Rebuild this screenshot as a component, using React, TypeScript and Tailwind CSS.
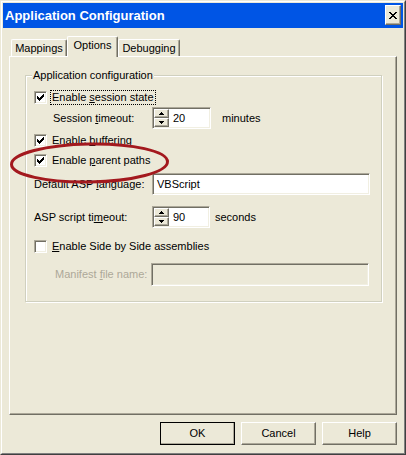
import type { ReactNode } from 'react';

const face = 'bg-[#ECE9D8]';
const sunken =
  'border border-t-[#ACA899] border-l-[#ACA899] border-r-white border-b-white shadow-[inset_1px_1px_0_#716F64,inset_-1px_-1px_0_#F1EFE2]';
const raised =
  'border border-t-white border-l-white border-r-[#716F64] border-b-[#716F64] shadow-[inset_-1px_-1px_0_#ACA899]';

function CheckBox({ checked }: { checked?: boolean }) {
  return (
    <span className={`w-[13px] h-[13px] shrink-0 bg-white flex items-center justify-center ${sunken}`}>
      {checked && (
        <svg width="7" height="7" viewBox="0 0 7 7" shapeRendering="crispEdges">
          <path d="M6 0h1v3h-1v1h-1v1h-1v1h-1v1h-1v-1h-1v-1h-1v-3h1v1h1v1h1v-1h1v-1h1z" fill="#000" />
        </svg>
      )}
    </span>
  );
}

function CheckRow({ checked, focused, children }: { checked?: boolean; focused?: boolean; children: ReactNode }) {
  return (
    <div className="h-[15px] flex items-center">
      <CheckBox checked={checked} />
      <span
        className={`ml-[3px] px-[1px] leading-[13px] border ${
          focused ? 'border-dotted border-black' : 'border-transparent'
        }`}
      >
        {children}
      </span>
    </div>
  );
}

function Arrow({ up }: { up?: boolean }) {
  return (
    <svg width="5" height="3" viewBox="0 0 5 3" shapeRendering="crispEdges">
      <path d={up ? 'M2 0h1v1h1v1h1v1h-5v-1h1v-1h1z' : 'M0 0h5v1h-1v1h-1v1h-1v-1h-1v-1h-1z'} fill="#000" />
    </svg>
  );
}

function Spinner({ value, width }: { value: string; width: string }) {
  return (
    <div className={`h-[22px] ${width} bg-white flex p-[1px] ${sunken}`}>
      <div className="flex flex-col w-[15px] shrink-0">
        <span className={`h-[10px] flex items-center justify-center ${face} ${raised}`}>
          <Arrow up />
        </span>
        <span className={`h-[10px] flex items-center justify-center ${face} ${raised}`}>
          <Arrow />
        </span>
      </div>
      <span className="pl-[4px] self-center">{value}</span>
    </div>
  );
}

function Tab({ label, active, width }: { label: string; active?: boolean; width: string }) {
  return (
    <div
      className={`${width} ${
        active ? 'h-[21px] -mb-px relative z-10' : 'h-[17px]'
      } ${face} border-t border-l border-white border-r border-r-[#716F64] rounded-t-[2px] shadow-[inset_-1px_0_0_#ACA899] flex items-center justify-center`}
    >
      <span className={active ? '-mt-[3px]' : ''}>{label}</span>
    </div>
  );
}

function DialogButton({ label, isDefault }: { label: string; isDefault?: boolean }) {
  return (
    <button
      className={`w-[75px] h-[23px] ${face} ${
        isDefault ? 'outline outline-1 outline-black -outline-offset-1' : ''
      } ${raised} flex items-center justify-center`}
    >
      {label}
    </button>
  );
}

export default function App() {
  return (
    <div className="relative w-[406px] h-[455px] bg-[#ECE9D8] font-['Liberation_Sans',Arial,sans-serif] text-[11px] text-black border border-t-[#ECE9D8] border-l-[#ECE9D8] border-r-[#404040] border-b-[#404040]">
      <div className="h-full border border-t-white border-l-white border-r-[#808080] border-b-[#808080] p-px flex flex-col">
        {/* title bar */}
        <div className="h-[25px] bg-[#0055E5] flex items-start shrink-0">
          <span className="pl-[2px] self-center text-white font-bold text-[13px] leading-none">
            Application Configuration
          </span>
          <span
            className={`ml-auto mr-[2px] mt-[2px] w-[16px] h-[20px] ${face} ${raised} flex items-center justify-center`}
          >
            <svg width="8" height="7" viewBox="0 0 8 7" shapeRendering="crispEdges">
              <path
                d="M0 0h2v1h1v1h2v-1h1v-1h2v1h-1v1h-1v1h-1v1h1v1h1v1h1v1h-2v-1h-1v-1h-2v1h-1v1h-2v-1h1v-1h1v-1h1v-1h-1v-1h-1v-1h-1z"
                fill="#000"
              />
            </svg>
          </span>
        </div>

        <div className="pl-[6px] pt-[8px]">
          {/* tabs */}
          <div className="flex items-end h-[20px] pl-[2px]">
            <Tab label="Mappings" width="w-[56px]" />
            <Tab label="Options" width="w-[51px]" active />
            <Tab label="Debugging" width="w-[62px]" />
          </div>

          {/* tab page */}
          <div className={`w-[388px] h-[359px] ${raised} pl-[15px] pt-[18px]`}>
            <div className="relative w-[357px] h-[227px] border border-[#D0D0BF] shadow-[inset_1px_1px_0_white,1px_1px_0_white] pt-[14px] pl-[8px]">
              <span className={`absolute -top-[7px] left-[6px] px-[1px] leading-[13px] ${face}`}>
                Application configuration
              </span>

              <CheckRow checked focused>
                Enable <u>s</u>ession state
              </CheckRow>

              <div className="mt-[2px] h-[22px] flex items-center">
                <span className="ml-[19px] w-[99px]">
                  Session <u>t</u>imeout:
                </span>
                <Spinner value="20" width="w-[59px]" />
                <span className="ml-[11px]">minutes</span>
              </div>

              <div className="mt-[4px]">
                <CheckRow checked>
                  Enable <u>b</u>uffering
                </CheckRow>
              </div>

              <div className="mt-[5px]">
                <CheckRow checked>
                  Enable <u>p</u>arent paths
                </CheckRow>
              </div>

              <div className="mt-[5px] h-[22px] flex items-center">
                <span className="w-[118px]">
                  Default ASP <u>l</u>anguage:
                </span>
                <div className={`h-[22px] w-[218px] bg-white flex items-center pl-[4px] ${sunken}`}>VBScript</div>
              </div>

              <div className="mt-[11px] h-[22px] flex items-center">
                <span className="w-[118px]">
                  ASP script ti<u>m</u>eout:
                </span>
                <Spinner value="90" width="w-[58px]" />
                <span className="ml-[5px]">seconds</span>
              </div>

              <div className="mt-[11px]">
                <CheckRow>
                  <u>E</u>nable Side by Side assemblies
                </CheckRow>
              </div>

              <div className="mt-[9px] h-[23px] flex items-center">
                <span className="ml-[21px] w-[96px] text-[#ACA899]">
                  Manifest <u>f</u>ile name:
                </span>
                <div className={`h-[23px] w-[218px] ${face} ${sunken}`} />
              </div>
            </div>
          </div>

          {/* dialog buttons */}
          <div className="w-[388px] mt-[7px] flex justify-end gap-[6px]">
            <DialogButton label="OK" isDefault />
            <DialogButton label="Cancel" />
            <DialogButton label="Help" />
          </div>
        </div>
      </div>

      {/* red marker ring around the parent paths option */}
      <svg className="absolute left-0 top-[130px] pointer-events-none" width="180" height="60" viewBox="0 0 180 60">
        <ellipse
          cx="88.5"
          cy="32"
          rx="78"
          ry="19"
          fill="none"
          stroke="#A3191E"
          strokeWidth="3"
          transform="rotate(-1 88.5 32)"
        />
      </svg>
    </div>
  );
}
